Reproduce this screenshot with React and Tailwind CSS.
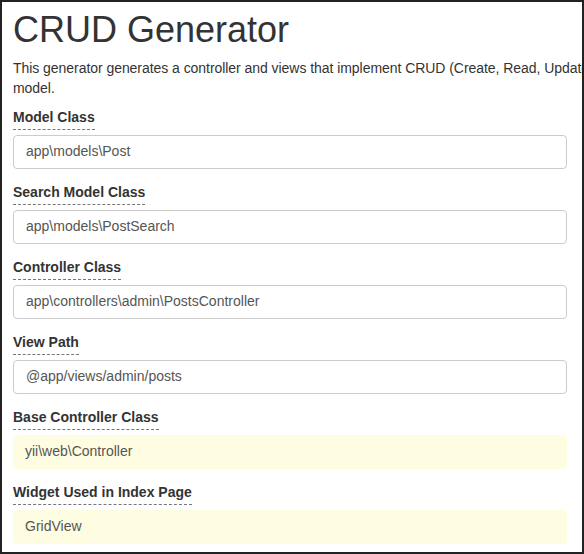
import React from 'react';

const fields = [
    { label: 'Model Class', value: 'app\\models\\Post' },
    { label: 'Search Model Class', value: 'app\\models\\PostSearch' },
    { label: 'Controller Class', value: 'app\\controllers\\admin\\PostsController' },
    { label: 'View Path', value: '@app/views/admin/posts' },
    { label: 'Base Controller Class', value: 'yii\\web\\Controller', sticky: true },
    { label: 'Widget Used in Index Page', value: 'GridView', sticky: true },
];

const Field = ({ label, value, sticky }) => (
    <div className="mb-[13px]">
        <label className="block w-fit font-bold text-[14px] leading-5 text-[#333] pb-[2px] border-b border-dashed border-[#777]">
            {label}
        </label>
        <div
            className={
                sticky
                    ? 'mt-[5px] w-[554px] h-[34px] px-3 flex items-center text-[14px] text-[#555] bg-[#fffde1] rounded'
                    : 'mt-[5px] w-[554px] h-[34px] px-3 flex items-center text-[14px] text-[#555] bg-white border border-[#ccc] rounded'
            }
        >
            {value}
        </div>
    </div>
);

export default function App() {
    return (
        <div className="w-[584px] h-[554px] overflow-hidden bg-white border-2 border-[#222] font-['Liberation_Sans',Arial,sans-serif] text-[#333]">
            <div className="pl-[11px] pt-[8px]">
                <h1 className="text-[36px] leading-[1.1] font-normal text-[#333]">CRUD Generator</h1>
                <p className="mt-[8px] text-[14px] leading-5 whitespace-nowrap tracking-[-0.05px]">
                    This generator generates a controller and views that implement CRUD (Create, Read, Update, Delete) operations for the specified data
                    <br />
                    model.
                </p>
                <div className="mt-[9px]">
                    {fields.map((f) => (
                        <Field key={f.label} {...f} />
                    ))}
                </div>
            </div>
        </div>
    );
}
